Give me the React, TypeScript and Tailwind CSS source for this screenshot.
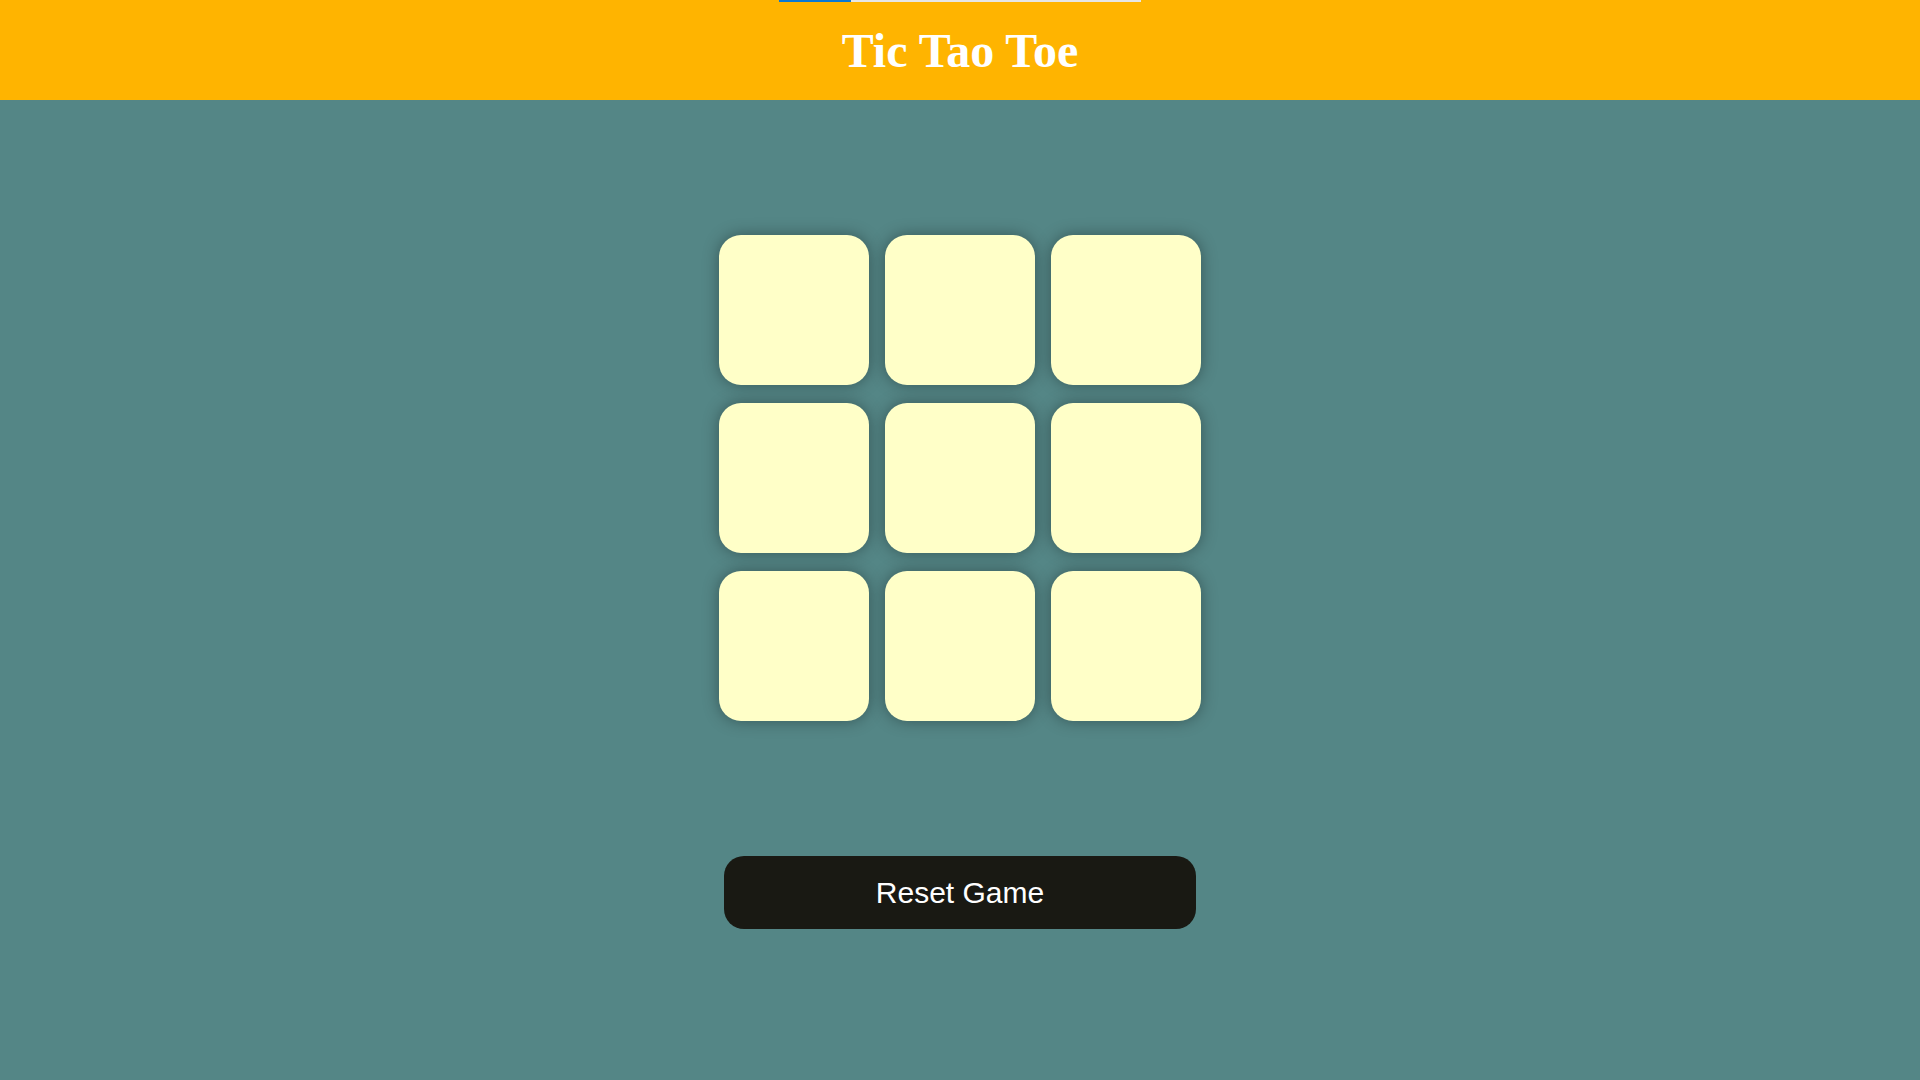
import { useState } from 'react';

const emptyBoard = Array(9).fill('');

export default function App() {
    const [board, setBoard] = useState<string[]>(emptyBoard);
    const [turn, setTurn] = useState('X');

    const handleClick = (i: number) => {
        if (board[i]) return;
        const next = [...board];
        next[i] = turn;
        setBoard(next);
        setTurn(turn === 'X' ? 'O' : 'X');
    };

    const resetGame = () => {
        setBoard(emptyBoard);
        setTurn('X');
    };

    return (
        <div className="min-h-screen bg-[#548686] font-['Liberation_Sans',Arial,sans-serif]">
            <header className="relative h-[100px] bg-[#ffb400] flex items-center justify-center">
                <div className="absolute top-0 left-[779px] w-[362px] h-[2px] bg-[#e6e6e6]">
                    <div className="w-[72px] h-full bg-[#0a78d4]" />
                </div>
                <h1 className="text-white font-bold text-[48px] leading-none font-['Liberation_Serif','Times_New_Roman',serif] pt-[2px]">
                    Tic Tao Toe
                </h1>
            </header>

            <main className="flex flex-col items-center">
                <div className="mt-[135px] grid grid-cols-3 gap-x-4 gap-y-[18px]">
                    {board.map((cell, i) => (
                        <button
                            key={i}
                            onClick={() => handleClick(i)}
                            className="w-[150px] h-[150px] rounded-[22px] bg-[#ffffc8] shadow-[0_0_16px_rgba(0,0,0,0.35)] text-[80px] font-bold text-[#191913] flex items-center justify-center"
                        >
                            {cell}
                        </button>
                    ))}
                </div>

                <button
                    onClick={resetGame}
                    className="mt-[135px] w-[472px] h-[73px] rounded-[20px] bg-[#191913] text-white text-[30px]"
                >
                    Reset Game
                </button>
            </main>
        </div>
    );
}
